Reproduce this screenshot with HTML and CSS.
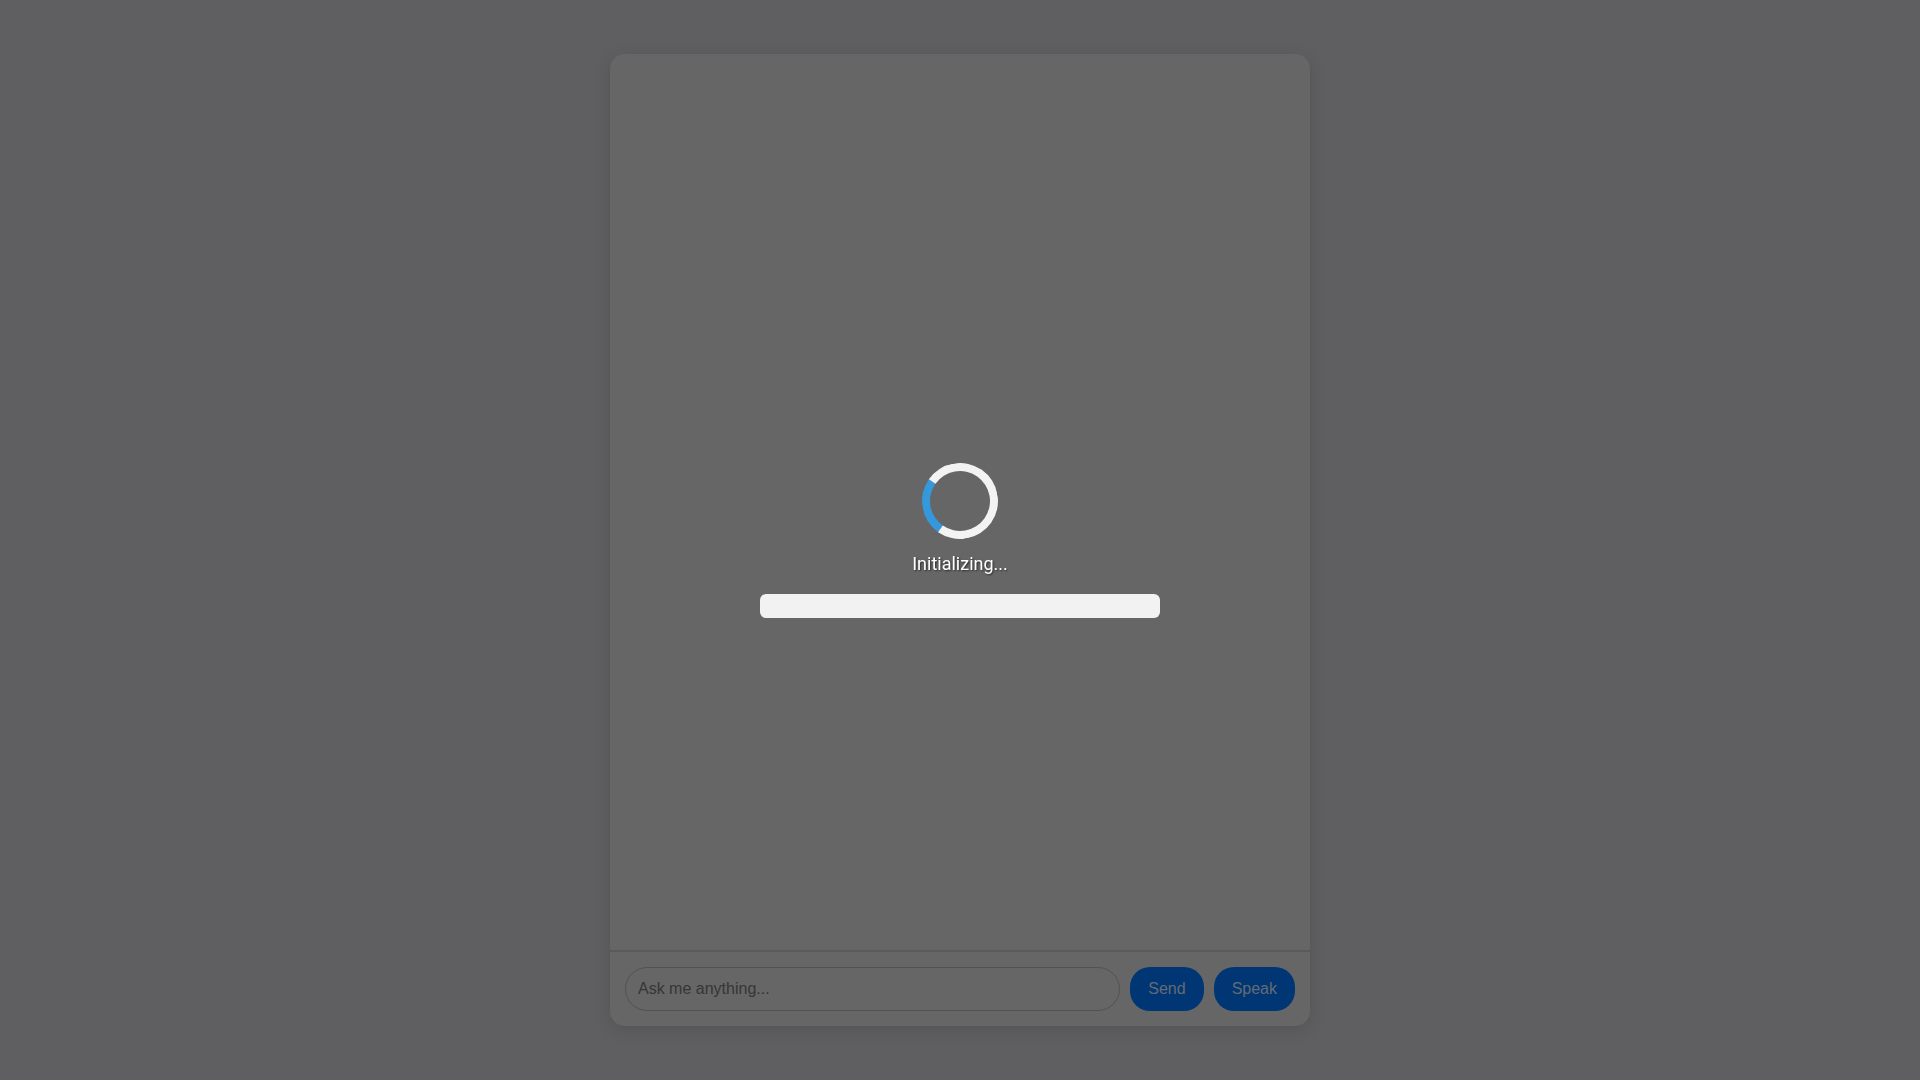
FILE: index.html
```html
<!DOCTYPE html>
<html lang="en">
<head>
<meta charset="utf-8">
<title>Assistant</title>
<link rel="stylesheet" href="styles.css">
</head>
<body>
<div class="chat-card">
  <div class="messages"></div>
  <div class="input-bar">
    <input class="chat-input" type="text" placeholder="Ask me anything...">
    <button class="btn">Send</button>
    <button class="btn">Speak</button>
  </div>
</div>
<div class="loading-overlay">
  <div class="spinner"></div>
  <div class="loading-text">Initializing...</div>
  <div class="progress"><div class="progress-fill"></div></div>
</div>
</body>
</html>
```
FILE: styles.css
```css
* { box-sizing: border-box; }
html, body { height: 100%; }
body {
  margin: 0;
  background: #bebec4;
  font-family: "Liberation Sans", Arial, sans-serif;
  display: flex;
  justify-content: center;
  align-items: center;
}
.chat-card {
  width: 700px;
  height: 972px;
  background: #cccccc;
  border-radius: 15px;
  box-shadow: 0 4px 18px rgba(0,0,0,0.12);
  display: flex;
  flex-direction: column;
  overflow: hidden;
}
.messages { flex: 1; }
.input-bar {
  border-top: 2px solid #b4b4b4;
  padding: 15px;
  display: flex;
  gap: 10px;
}
.chat-input {
  flex: 1;
  min-width: 0;
  height: 44px;
  border: 1px solid #a4a4a4;
  border-radius: 22px;
  background: #cccccc;
  padding: 0 12px;
  font-family: "Liberation Sans", Arial, sans-serif;
  font-size: 16px;
  outline: none;
}
.chat-input::placeholder { color: #6c6c6c; }
.btn {
  height: 44px;
  padding: 0 18px;
  border: none;
  border-radius: 20px;
  background: #006ce8;
  color: #c6d4e6;
  font-family: "Liberation Sans", Arial, sans-serif;
  font-size: 16px;
}
.loading-overlay {
  position: fixed;
  inset: 0;
  background: rgba(0,0,0,0.5);
  display: flex;
  flex-direction: column;
  align-items: center;
  justify-content: center;
}
.spinner {
  width: 76px;
  height: 76px;
  border: 8px solid #f3f3f3;
  border-top-color: #3498db;
  border-radius: 50%;
  transform: rotate(-100deg);
}
.loading-text {
  margin-top: 14px;
  font-family: Roboto, "Liberation Sans", sans-serif;
  font-size: 18px;
  color: #ffffff;
  text-shadow: 1px 1px 2px rgba(0,0,0,0.6);
}
.progress {
  margin-top: 20px;
  width: 400px;
  height: 24px;
  background: #f2f2f2;
  border-radius: 6px;
  overflow: hidden;
}
.progress-fill { width: 0; height: 100%; background: #3498db; }
```
